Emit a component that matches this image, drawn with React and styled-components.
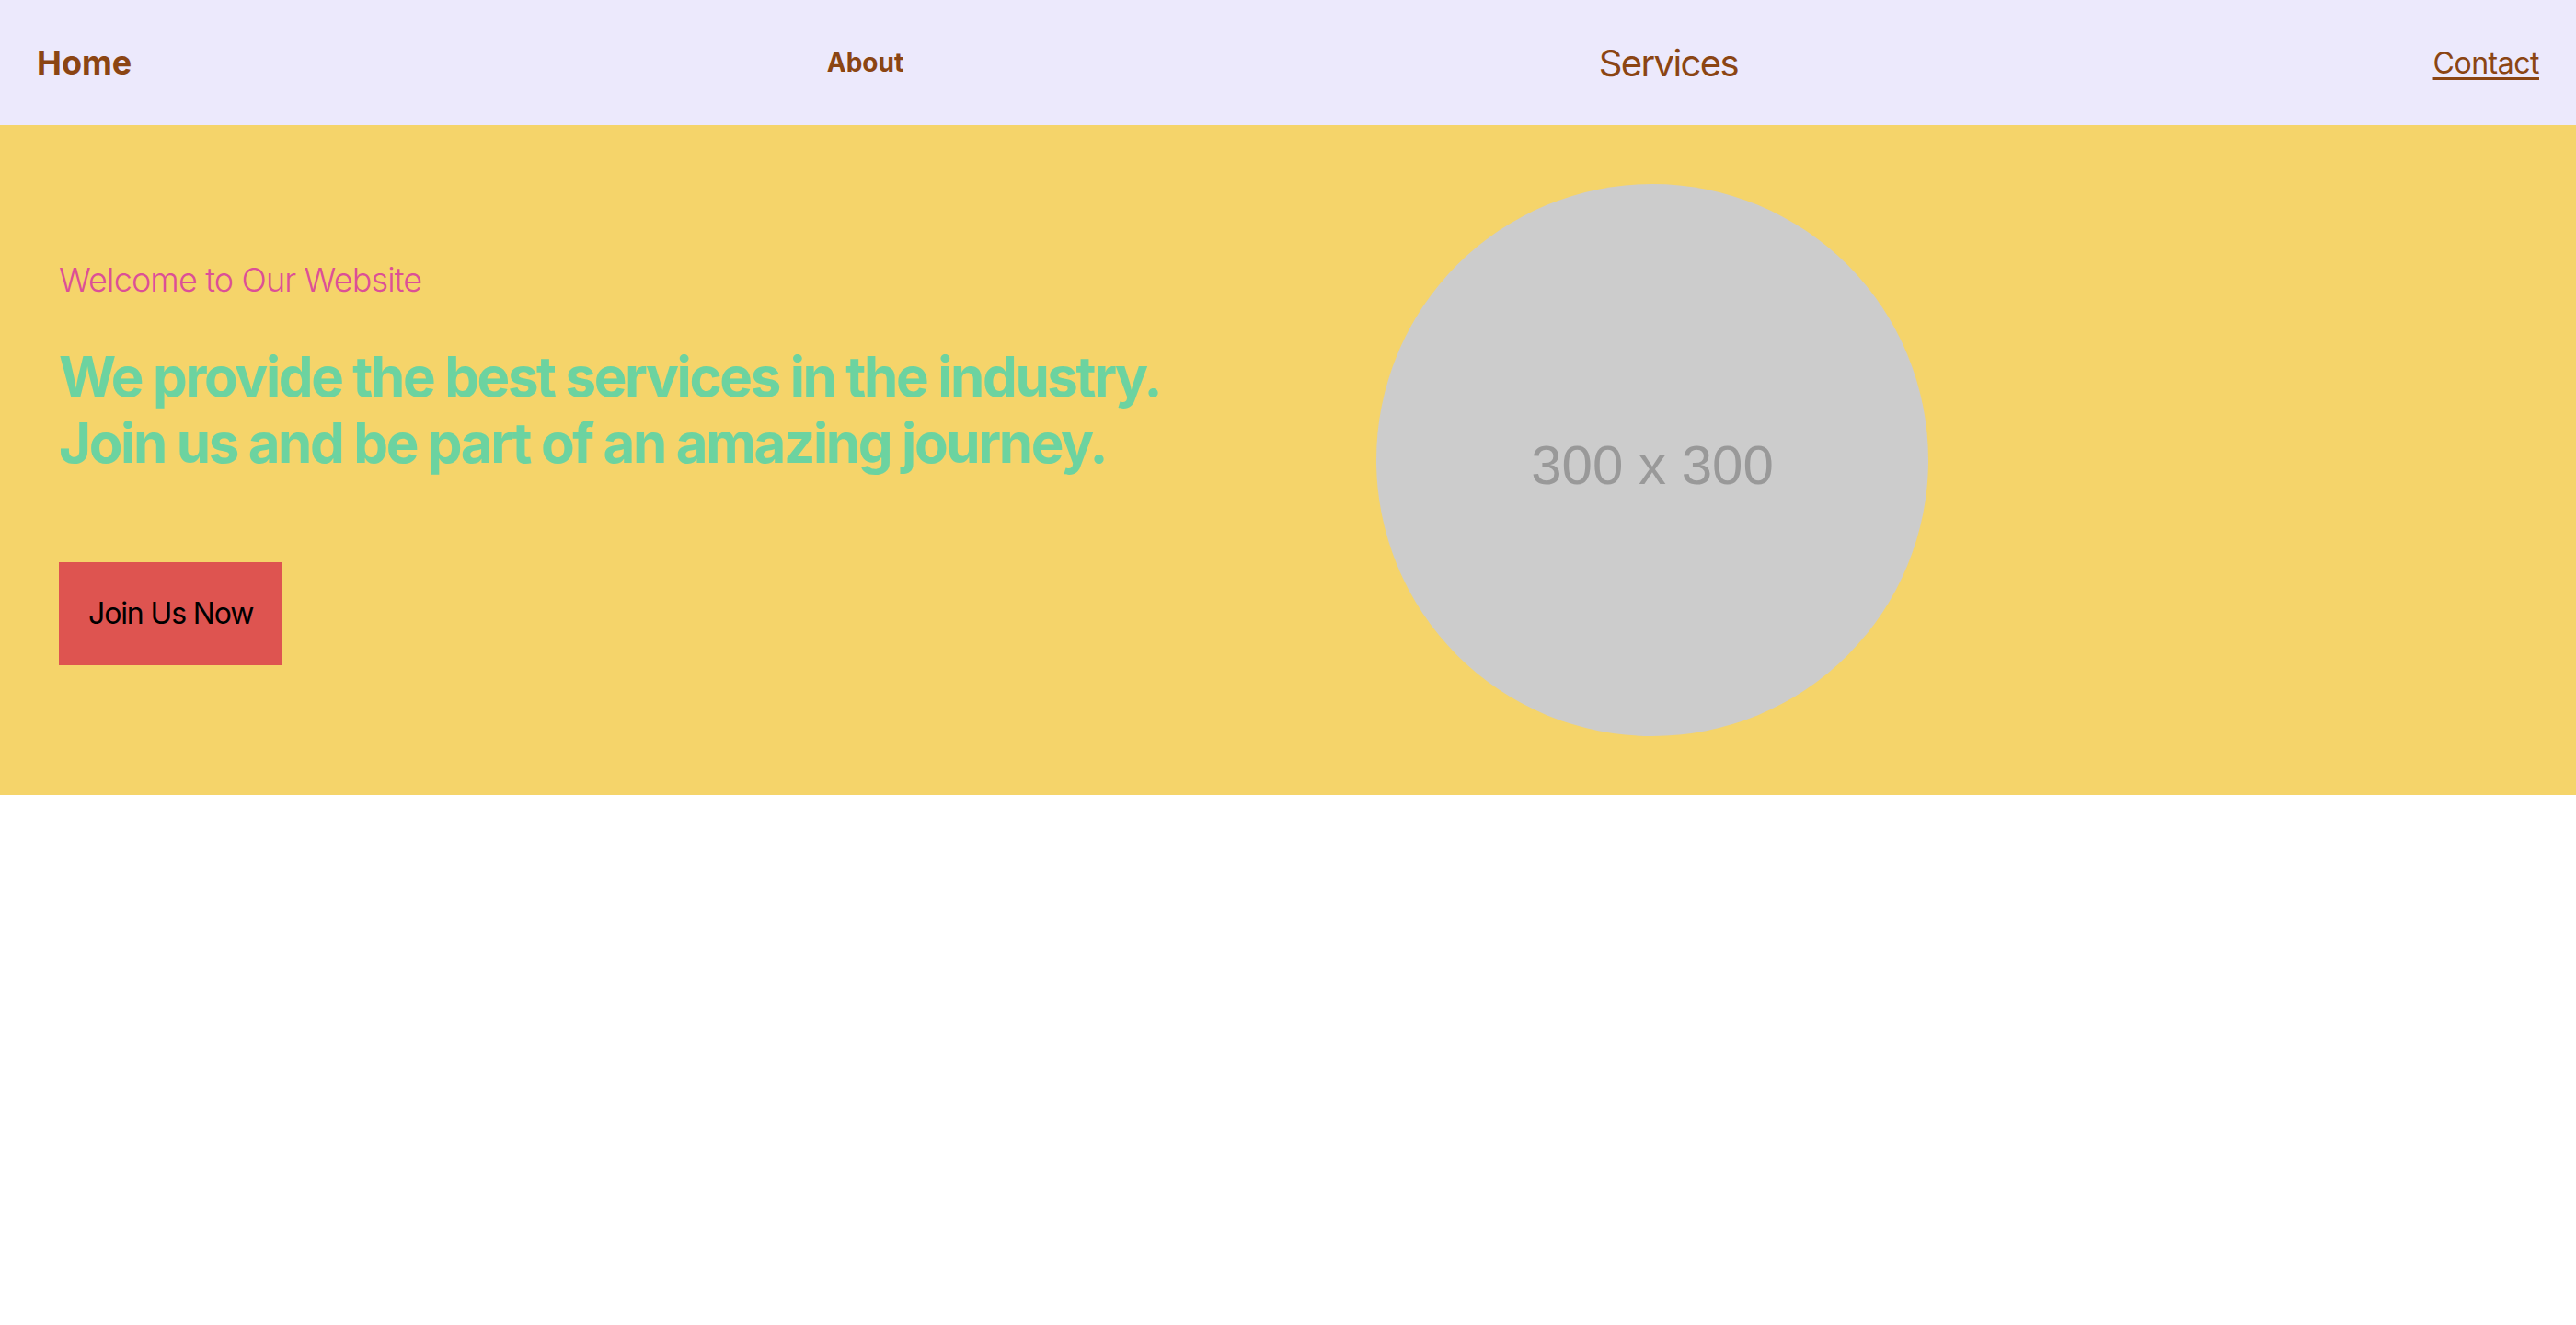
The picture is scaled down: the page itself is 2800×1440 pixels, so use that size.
import React from 'react';
import styled, { createGlobalStyle } from 'styled-components';

const GlobalStyle = createGlobalStyle`
    body {
        margin: 0;
        font-family: Inter, "Noto Sans", sans-serif;
        background: #fff;
    }
`;

const NavBar = styled.nav`
    display: flex;
    justify-content: space-between;
    align-items: center;
    height: 136px;
    padding: 2px 40px 0;
    background-color: #ece9fc;
    box-sizing: border-box;
`;

const NavLink = styled.a`
    color: #8b4513;
    font-size: ${props => props.size}px;
    font-weight: ${props => (props.bold ? 700 : 400)};
    letter-spacing: ${props => props.spacing || 0}em;
    text-decoration: ${props => (props.underline ? 'underline' : 'none')};
    text-underline-offset: 4px;
    text-decoration-thickness: 3px;
    line-height: 1.2;
    cursor: pointer;
`;

const Hero = styled.section`
    display: flex;
    align-items: center;
    padding: 64px;
    background-color: #f5d46a;
`;

const HeroText = styled.div`
    flex: 0 0 1432px;
    display: flex;
    flex-direction: column;
    align-items: flex-start;
    padding-top: 6px;
`;

const Welcome = styled.p`
    margin: 0 0 46px;
    color: #dc4f97;
    font-size: 36px;
    font-weight: 300;
    letter-spacing: -0.024em;
    line-height: 1.2;
`;

const Headline = styled.h1`
    margin: 0 0 94px;
    color: #6cd3a0;
    font-size: 60px;
    font-weight: 700;
    letter-spacing: -0.04em;
    line-height: 72px;
`;

const JoinButton = styled.button`
    font-family: inherit;
    font-size: 32px;
    line-height: 48px;
    letter-spacing: -0.035em;
    padding: 32px;
    border: none;
    background-color: #de5450;
    color: #000;
    cursor: pointer;
`;

const Placeholder = styled.div`
    width: 600px;
    height: 600px;
    flex: 0 0 600px;
    border-radius: 50%;
    background-color: #cccccc;
    display: flex;
    align-items: center;
    justify-content: center;
    color: #999999;
    font-family: "Liberation Sans", Arial, sans-serif;
    font-size: 60px;
    padding-top: 10px;
    box-sizing: border-box;
`;

const App = () => {
    return (
        <>
            <GlobalStyle />
            <NavBar>
                <NavLink size={36} bold>Home</NavLink>
                <NavLink size={28} bold>About</NavLink>
                <NavLink size={40} spacing={-0.04}>Services</NavLink>
                <NavLink size={32} spacing={-0.015} underline>Contact</NavLink>
            </NavBar>
            <Hero>
                <HeroText>
                    <Welcome>Welcome to Our Website</Welcome>
                    <Headline>
                        We provide the best services in the industry.<br />
                        Join us and be part of an amazing journey.
                    </Headline>
                    <JoinButton>Join Us Now</JoinButton>
                </HeroText>
                <Placeholder>300 x 300</Placeholder>
            </Hero>
        </>
    );
};

export default App;
